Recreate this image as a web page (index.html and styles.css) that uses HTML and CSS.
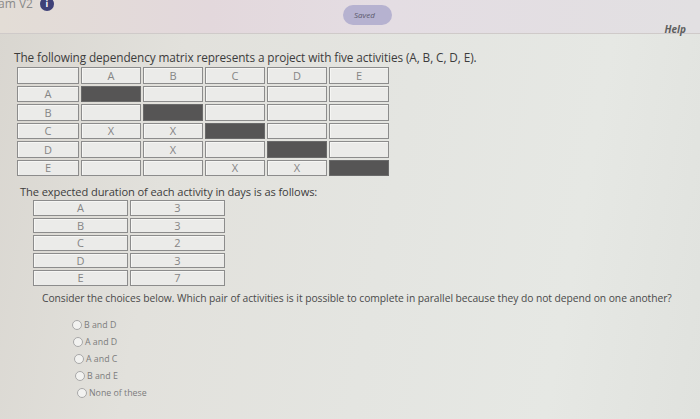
FILE: index.html
```html
<!DOCTYPE html>
<html>
<head>
<meta charset="utf-8">
<link rel="stylesheet" href="styles.css">
</head>
<body>
<div class="page">
  <header class="top">
    <div class="title"><span class="name">am V2</span><span class="info">i</span></div>
    <div class="saved">Saved</div>
    <div class="help">Help</div>
  </header>
  <main class="content">
    <p class="lead">The following dependency matrix represents a project with five activities (A, B, C, D, E).</p>
    <table class="matrix">
      <tr><td class="lab"></td><td>A</td><td>B</td><td>C</td><td>D</td><td>E</td></tr>
      <tr><td class="lab">A</td><td class="dk"></td><td></td><td></td><td></td><td></td></tr>
      <tr><td class="lab">B</td><td></td><td class="dk"></td><td></td><td></td><td></td></tr>
      <tr><td class="lab">C</td><td>X</td><td>X</td><td class="dk"></td><td></td><td></td></tr>
      <tr><td class="lab">D</td><td></td><td>X</td><td></td><td class="dk"></td><td></td></tr>
      <tr><td class="lab">E</td><td></td><td></td><td>X</td><td>X</td><td class="dk"></td></tr>
    </table>
    <div class="q2">
      <span class="num">1</span>
      <p class="lead2">The expected duration of each activity in days is as follows:</p>
    </div>
    <table class="dur">
      <tr><td>A</td><td>3</td></tr>
      <tr><td>B</td><td>3</td></tr>
      <tr><td>C</td><td>2</td></tr>
      <tr><td>D</td><td>3</td></tr>
      <tr><td>E</td><td>7</td></tr>
    </table>
    <p class="ask">Consider the choices below. Which pair of activities is it possible to complete in parallel because they do not depend on one another?</p>
    <ul class="opts">
      <li class="o1"><span class="radio"></span>B and D</li>
      <li class="o2"><span class="radio"></span>A and D</li>
      <li class="o3"><span class="radio"></span>A and C</li>
      <li class="o4"><span class="radio"></span>B and E</li>
      <li class="o5"><span class="radio"></span>None of these</li>
    </ul>
  </main>
</div>
</body>
</html>
```
FILE: styles.css
```css
html, body {
  margin: 0;
  padding: 0;
}
body {
  width: 700px;
  height: 419px;
  overflow: hidden;
  font-family: "Open Sans", "Liberation Sans", sans-serif;
  background: linear-gradient(100deg, #d9d6d0 0%, #e2e1dc 25%, #e4e5e1 55%, #e6e8e4 80%, #e0e2de 100%);
}
.page {
  width: 700px;
  height: 419px;
  display: flex;
  flex-direction: column;
}
.top {
  height: 33px;
  display: flex;
  align-items: flex-start;
  border-bottom: 1px solid #cfcac9;
  background: linear-gradient(90deg, #e3ddd6 0%, #e3d8dc 30%, #e4dde3 55%, #e2e0e2 100%);
}
.title {
  display: flex;
  align-items: center;
  margin-top: -4px;
  width: 343px;
}
.name {
  font-size: 12px;
  line-height: 14px;
  color: #8a8a8a;
  margin-left: -2px;
}
.info {
  width: 14px;
  height: 14px;
  border-radius: 50%;
  background: #3f4178;
  color: #fff;
  font-size: 9px;
  font-weight: bold;
  line-height: 14px;
  text-align: center;
  margin-left: 7px;
  margin-top: 1px;
}
.saved {
  margin-top: 5px;
  width: 49px;
  height: 20px;
  border-radius: 10px;
  background: #b6b2d0;
  color: #5c5a6e;
  font-size: 8px;
  font-style: italic;
  line-height: 20px;
  text-indent: 11px;
}
.help {
  margin-left: auto;
  margin-right: 14px;
  margin-top: 22px;
  font-size: 10px;
  font-weight: bold;
  font-style: italic;
  color: #5e5e5e;
}
.content {
  padding-left: 14px;
  display: flex;
  flex-direction: column;
  align-items: flex-start;
}
.lead {
  margin: 16px 0 0 0;
  font-size: 11.8px;
  line-height: 14px;
  color: #3c3c3c;
  letter-spacing: -0.1px;
  white-space: nowrap;
}
table {
  border-collapse: separate;
  border-spacing: 2px;
}
td {
  border: 1px solid #8c8c8c;
  background: #ebebe9;
  color: #858585;
  text-align: center;
  font-size: 11px;
  padding: 0;
  line-height: 13px;
  box-shadow: inset 1px 1px 0 #f6f6f4;
}
.matrix {
  margin-left: 1px;
  margin-top: 1px;
}
.matrix td {
  width: 58px;
  height: 14.5px;
}
.matrix td.lab {
  width: 60px;
}
.matrix td.dk {
  background: #565555;
  box-shadow: none;
  border-color: #6a6a6a;
}
.q2 {
  display: flex;
  align-items: center;
  margin-top: 7px;
  margin-left: -24px;
}
.num {
  width: 20px;
  height: 20px;
  border-radius: 50%;
  border: 1.5px solid #6a6a6a;
  font-size: 9px;
  color: #555;
  line-height: 18px;
  text-align: right;
  padding-right: 4px;
  box-sizing: border-box;
  margin-left: -10px;
  margin-top: -10px;
}
.lead2 {
  margin: 0 0 0 20px;
  font-size: 11.1px;
  line-height: 13px;
  color: #3c3c3c;
  letter-spacing: -0.1px;
  white-space: nowrap;
}
.dur {
  margin-left: 17px;
  margin-top: 0;
}
.dur td {
  width: 93px;
  height: 13.5px;
}
.ask {
  margin: 4px 0 0 28px;
  font-size: 10.3px;
  line-height: 13px;
  color: #4a4a4a;
  letter-spacing: -0.05px;
  white-space: nowrap;
}
.opts {
  list-style: none;
  margin: 14px 0 0 58px;
  padding: 0;
  display: flex;
  flex-direction: column;
  gap: 4px;
}
.opts li {
  display: flex;
  align-items: center;
  font-size: 8.8px;
  line-height: 13px;
  color: #7c7c7c;
}
.radio {
  width: 8px;
  height: 8px;
  border-radius: 50%;
  border: 1px solid #a8a8a8;
  background: #f2f2f0;
  margin-right: 2px;
}
.o2 { margin-left: 1px; }
.o3 { margin-left: 2px; color: #858585; }
.o4 { margin-left: 3px; color: #8c8c8c; }
.o5 { margin-left: 5px; color: #959595; }
```
